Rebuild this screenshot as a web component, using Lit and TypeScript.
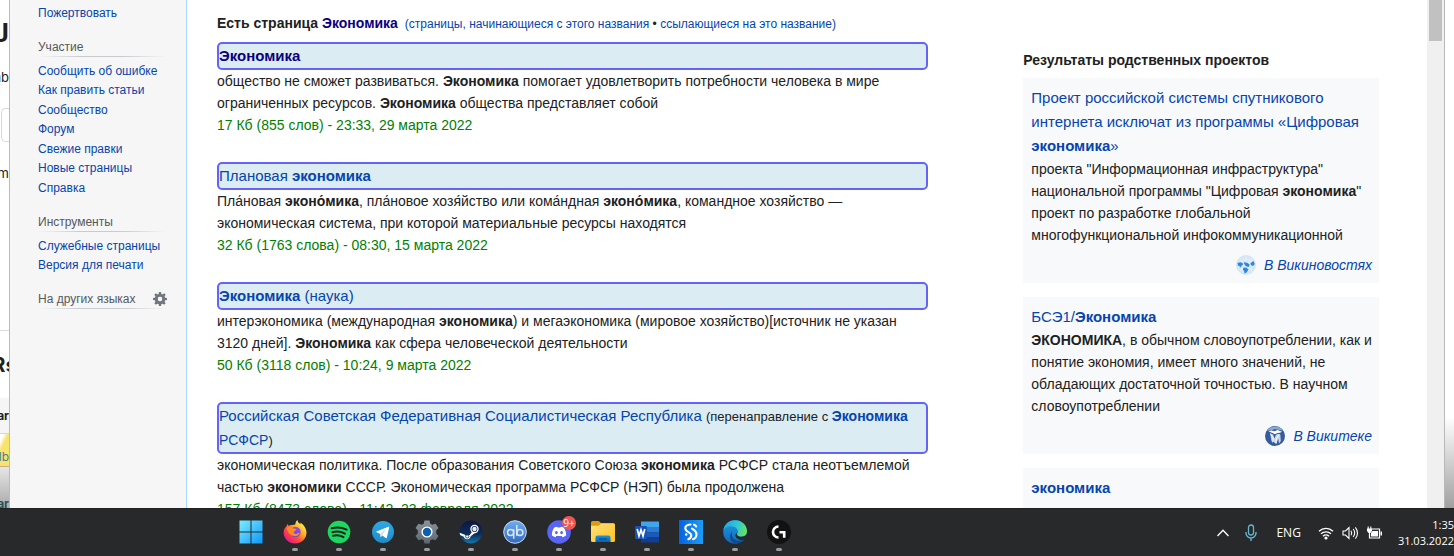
import { LitElement, html, svg, css } from "lit";
import { customElement } from "lit/decorators.js";

const searchLinks = ["Сообщить об ошибке", "Как править статьи", "Сообщество", "Форум", "Свежие правки", "Новые страницы", "Справка"];
const toolLinks = ["Служебные страницы", "Версия для печати"];

const results = [
  {
    title: html`<a class="visited" href="#"><b>Экономика</b></a>`,
    text: html`общество не сможет развиваться. <b>Экономика</b> помогает удовлетворить потребности человека в мире ограниченных ресурсов. <b>Экономика</b> общества представляет собой`,
    meta: "17 Кб (855 слов) - 23:33, 29 марта 2022",
  },
  {
    title: html`<a href="#">Плановая <b>экономика</b></a>`,
    text: html`Пла́новая <b>эконо́мика</b>, пла́новое хозя́йство или кома́ндная <b>эконо́мика</b>, командное хозяйство — экономическая система, при которой материальные ресурсы находятся`,
    meta: "32 Кб (1763 слова) - 08:30, 15 марта 2022",
  },
  {
    title: html`<a href="#"><b>Экономика</b> (наука)</a>`,
    text: html`интерэкономика (международная <b>экономика</b>) и мегаэкономика (мировое хозяйство)[источник не указан 3120 дней]. <b>Экономика</b> как сфера человеческой деятельности`,
    meta: "50 Кб (3118 слов) - 10:24, 9 марта 2022",
  },
  {
    title: html`<a href="#">Российская Советская Федеративная Социалистическая Республика</a> <span class="redirect">(перенаправление с <a href="#"><b>Экономика</b> РСФСР</a>)</span>`,
    text: html`экономическая политика. После образования Советского Союза <b>экономика</b> РСФСР стала неотъемлемой частью <b>экономики</b> СССР. Экономическая программа РСФСР (НЭП) была продолжена`,
    meta: "157 Кб (8473 слова) - 11:42, 23 февраля 2022",
  },
];

const newsLogo = svg`<svg viewBox="0 0 20 20" width="20" height="20">
  <circle cx="10" cy="10" r="10" fill="#d5e6f6"/>
  <path d="M10 1v18M1 10h18M3.500 3.500l13 13M16.500 3.500l-13 13" stroke="#eef6fd" stroke-width=".6"/>
  <circle cx="10" cy="10" r="6" fill="none" stroke="#eef6fd" stroke-width=".6"/>
  <path d="M1.500 8l3-.8 2.200 1 .2 1.800-1.700.8-.4 2-1.500-1.800-1.400-.6zM7.500 7.200l3.500.6 2.600 1.700-.9 2.600-2.200-.6L9 10.200zM14.500 8.300l2.800-2.300 1.500 3-1.700 2-2.100-.7zM7.500 12.500l3 .3 2 2-2 2.800-2 1.200-.3-2.600-1.300-1.500z" fill="#2f86d8"/>
</svg>`;

const sourceLogo = svg`<svg viewBox="0 0 20 20" width="20" height="20">
  <circle cx="10" cy="10" r="10" fill="#375a9c"/>
  <path d="M2 4.500A10 10 0 0 1 18 4.500L14 4 10 3 6 4.500z" fill="#8ba9cc"/>
  <path d="M3.500 5.500l3-1 3 .8 3-1.400 4.500 1.900-2 1-2.500.2-2.500 1.300L7 6.800z" fill="#fff"/>
  <path d="M5 7l3 1.500 1.500 4L11 8.800l2.500-1 1.800.7.5 6.500-1.800 2.500-.8-5-1.700 5-2-.5-1-3-.8 3L6.500 15z" fill="#c8d9e8"/>
  <path d="M6 8.500l1.800 3 .5 4.500M14 8.500l-2.500 4-.5 5" stroke="#f5fafc" stroke-width="1" fill="none"/>
</svg>`;

const sisters = [
  {
    title: html`Проект российской системы спутникового интернета исключат из программы «Цифровая <b>экономика</b>»`,
    text: html`проекта "Информационная инфраструктура" национальной программы "Цифровая <b>экономика</b>" проект по разработке глобальной многофункциональной инфокоммуникационной`,
    logo: newsLogo,
    site: "В Викиновостях",
  },
  {
    title: html`БСЭ1/<b>Экономика</b>`,
    text: html`<b>ЭКОНОМИКА</b>, в обычном словоупотреблении, как и понятие экономия, имеет много значений, не обладающих достаточной точностью. В научном словоупотреблении`,
    logo: sourceLogo,
    site: "В Викитеке",
  },
];

const apps = [
  { name: "Windows", running: false, art: svg`
    <defs><linearGradient id="win" x1="0" y1="0" x2="24" y2="24" gradientUnits="userSpaceOnUse"><stop stop-color="#7ff0ff"/><stop offset="1" stop-color="#0a94fa"/></linearGradient></defs>
    <path d="M.5.500h11v11H.5zM12.500.500h11v11h-11zM.5 12.500h11v11H.5zM12.500 12.500h11v11h-11z" fill="url(#win)"/>` },
  { name: "Firefox", running: true, art: svg`
    <defs>
      <linearGradient id="ff" x1="20" y1="3" x2="4" y2="21" gradientUnits="userSpaceOnUse"><stop stop-color="#fff44f"/><stop offset=".35" stop-color="#ffa827"/><stop offset=".65" stop-color="#ff4b3a"/><stop offset="1" stop-color="#e5158d"/></linearGradient>
      <linearGradient id="fp" x1="15" y1="6" x2="9" y2="16" gradientUnits="userSpaceOnUse"><stop stop-color="#a34bd8"/><stop offset="1" stop-color="#5a50d8"/></linearGradient>
    </defs>
    <path d="M3.400 6.500C4 5 4.600 4.200 5 4c0 .7.200 1.500.6 2 1-.8 2-1.100 3.200-1.100C11 5 12 4.800 12.500 3.500 12.700 2 13.200.800 14.500 0c-.1 2 1.500 3 3 4.300.2-.6 0-1.200-.2-1.800C21 5 23.500 8.800 23.500 12.600 23.500 19 18.300 23.600 12 23.600S.6 18.700.6 12.600c0-2.500.8-4.500 2.800-6.100z" fill="url(#ff)"/>
    <circle cx="12.500" cy="12" r="5.200" fill="url(#fp)"/>
    <path d="M3.500 8c2-1.600 5.200-1.200 6.800.6 1.300.2 2.800.2 3 .8-.3 1.200-2.300 1.600-2.600 2.600-.1 1 .9 2 2.300 1.900 1.600-.2 2.300-1.200 3.600-.7-1 2.300-3.500 3.300-5.500 2.800C7.500 15.500 4.500 12.500 3.500 8z" fill="#ff8a2a"/>` },
  { name: "Spotify", running: true, art: svg`
    <circle cx="12" cy="12" r="11.300" fill="#1ed760"/>
    <path d="M4.600 8.300c5-1.500 10.500-1 15 1.400M5.400 12.200c4.300-1.200 8.800-.7 12.600 1.400M6 15.800c3.600-.9 7.300-.5 10.500 1.300" fill="none" stroke="#14291b" stroke-linecap="round" stroke-width="2"/>` },
  { name: "Telegram", running: true, art: svg`
    <defs><linearGradient id="tg" x2="0" y2="1"><stop stop-color="#2fa9e6"/><stop offset="1" stop-color="#1f8bc9"/></linearGradient></defs>
    <circle cx="12" cy="12" r="11" fill="url(#tg)"/>
    <path d="M4.800 11.800l12.500-5c.6-.2 1 .1.800.9l-2.200 9.800c-.2.700-.6.800-1.200.5L11.300 15.500 9.700 17.300l-.5-3.400z" fill="#fff"/><path d="M9.300 14l6.200-5.500-4.500 6.400-1.300 2z" fill="#c5dcea"/>` },
  { name: "Параметры", running: true, art: svg`
    <defs><linearGradient id="st" x2="0" y2="1"><stop stop-color="#8b949b"/><stop offset="1" stop-color="#5d666f"/></linearGradient></defs>
    <path d="M9.500.500h5l.8 3.200 2 1 3.200-1L23.500 8l-2.300 2.400v3.200L23.500 16 20.500 20.300l-3.200-1-2 1-.8 3.200h-5l-.8-3.200-2-1-3.200 1L.500 16l2.300-2.400v-3.200L.500 8l3-4.300 3.200 1 2-1z" fill="url(#st)"/>
    <circle cx="12" cy="12" r="5.600" fill="#fff"/><circle cx="12" cy="12" r="4.200" fill="#0c5fb0"/>` },
  { name: "Steam", running: true, art: svg`
    <defs><linearGradient id="sm" x2="0" y2="1"><stop stop-color="#0c1640"/><stop offset=".6" stop-color="#0c2e5c"/><stop offset="1" stop-color="#1377b0"/></linearGradient></defs>
    <circle cx="12" cy="12" r="11.400" fill="url(#sm)"/>
    <path d="M.7 12.700l7 2.900 3-.6 3.300-4.500 2.500 2-4.800 3.800c-.5 2-1.800 3-3.500 3-1.800 0-3-1-3.400-2.500L1 15z" fill="#fff"/>
    <circle cx="15.500" cy="9" r="4.200" fill="#fff"/><circle cx="15.500" cy="9" r="2.900" fill="#16284e"/><circle cx="15.500" cy="9" r="2.200" fill="#e9edf2"/><circle cx="8.200" cy="16.300" r="1.700" fill="none" stroke="#16345c" stroke-width=".8"/>` },
  { name: "qBittorrent", running: true, art: svg`
    <defs><linearGradient id="qb" x2="0" y2="1"><stop stop-color="#70aef0"/><stop offset="1" stop-color="#3468bd"/></linearGradient></defs>
    <circle cx="12" cy="12" r="11.300" fill="url(#qb)" stroke="#c9dcf4" stroke-width="1"/>
    <g fill="none" stroke="#d7e6fa" stroke-width="1.500"><circle cx="7.600" cy="12.500" r="3"/><path d="M10.700 9.300v9.500M13.800 5v10.800"/><circle cx="16.900" cy="12.500" r="3"/></g>` },
  { name: "Discord", running: true, badge: "9+", art: svg`
    <circle cx="12" cy="12" r="11.800" fill="#5865f2"/>
    <path d="M7.200 7.600c1-.5 2-.8 3-.9l.5.900h2.600l.5-.9c1 .1 2 .4 3 .9 1.700 2.600 2.400 5 2.300 8-1.200.9-2.400 1.400-3.600 1.700l-.8-1.400H9.300l-.8 1.400c-1.200-.3-2.400-.8-3.600-1.700-.1-3 .6-5.400 2.300-8z" fill="#fff"/>
    <ellipse cx="9.400" cy="12.600" rx="1.400" ry="1.600" fill="#5865f2"/><ellipse cx="14.600" cy="12.600" rx="1.400" ry="1.600" fill="#5865f2"/>` },
  { name: "Проводник", running: true, art: svg`
    <defs><linearGradient id="fd" x2="1" y2="1"><stop stop-color="#ffe27a"/><stop offset="1" stop-color="#ffc021"/></linearGradient><linearGradient id="fb" x2="0" y2="1"><stop stop-color="#1d95dc"/><stop offset="1" stop-color="#0a5fae"/></linearGradient></defs>
    <path d="M0 2.500Q0 1 1.500 1h6.300l2.200 2H22q2 0 2 2v8H0z" fill="#dd9c08"/>
    <path d="M0 5.800h7.500L10 3.500h12.500Q24 3.500 24 5v15.500q0 1.500-1.500 1.500h-21Q0 22 0 20.500z" fill="url(#fd)"/>
    <path d="M4.500 22v-4.500q0-2 2-2h11q2 0 2 2V22z" fill="url(#fb)"/><path d="M8 19h8" stroke="#0a4e93" stroke-width="1.200"/>` },
  { name: "Word", running: true, art: svg`
    <path d="M6 1.500h18V8H6z" fill="#41a5ee"/><path d="M6 7h18v5.500H6z" fill="#2b7cd3"/><path d="M6 12.500h18v5H6z" fill="#185abd"/><path d="M6 17.500h18v5H6z" fill="#103f91"/>
    <rect x="0" y="6" width="12" height="13" rx="1" fill="#1752b5"/>
    <path d="M2.200 9l1.800 7L6 9.800 8 16l1.800-7" fill="none" stroke="#fff" stroke-width="1.700"/>` },
  { name: "Scratchpad", running: true, art: svg`
    <defs><linearGradient id="sc" x2="1" y2="0"><stop stop-color="#0563e0"/><stop offset="1" stop-color="#1d9df5"/></linearGradient></defs>
    <path d="M0 0h24v24H0z" fill="url(#sc)"/>
    <path d="M11.500 4.500C8 4.700 6.300 6.200 6.300 8.300c0 4 6 3.600 6 7 0 2-1.200 3.300-3 3.900M13 8.700c1.800 1.300 4.500 2.200 4.500 5.500 0 2.500-1.500 4.300-3.500 5M15 4.700c1 .3 1.700.9 2.200 1.800" fill="none" stroke="#fff" stroke-linecap="round" stroke-width="2.100"/><circle cx="7.200" cy="14.500" r="1.200" fill="#fff"/>` },
  { name: "Edge", running: true, art: svg`
    <defs>
      <linearGradient id="ea" x1="2" y1="6" x2="24" y2="12" gradientUnits="userSpaceOnUse"><stop stop-color="#28a9e0"/><stop offset=".5" stop-color="#2fc6d8"/><stop offset="1" stop-color="#6be84f"/></linearGradient>
      <linearGradient id="eb" x2="0" y2="1"><stop stop-color="#1b9de2"/><stop offset="1" stop-color="#1464b8"/></linearGradient>
    </defs>
    <circle cx="12" cy="12" r="11.800" fill="url(#eb)"/>
    <path d="M.4 10.500C1.200 4.300 6 .2 12 .2c7 0 12 5 12 10.800 0 3.500-2.600 5.700-5.700 5.700-2.500 0-4.300-1-4.300-2 0-.7 1-1.200 1-2.900 0-2.500-2.500-5.500-7-5.500-3.500 0-6.300 1.700-7.600 4.200z" fill="url(#ea)"/>
    <path d="M9.500 11.500c-2.300 4.300 1.300 9.500 6.500 9.200 2.300 0 4.200-.8 5.800-2-2 3.300-5.600 5.100-9.800 5.100-4.500-1.300-7.300-8.500-2.500-12.300z" fill="#104a91"/>
    <path d="M14 14.700c.7 1.500 2.300 2 4.300 2 2.200 0 4-.7 5.400-2.200l.8 3-2 1.700c-4.500 1.800-9 0-10-3-.3-1.500.5-2.500 1.500-3.500.3.800-.2 1.200 0 2z" fill="#27292b"/>` },
  { name: "Logitech G HUB", running: true, art: svg`
    <circle cx="12" cy="12" r="12" fill="#121212"/>
    <path d="M11.500 6.500a5.500 5.500 0 1 0 0 11" fill="none" stroke="#fff" stroke-width="2.600"/><path d="M12.500 12.300h4.700v5.400" fill="none" stroke="#fff" stroke-width="2.600"/>` },
];

@customElement("sister-card")
class SisterCard extends LitElement {
  static properties = { card: { attribute: false } };
  declare card: any;
  static styles = css`
    :host { display: block; background: #f8f9fa; padding: 8px 7px 8px 8px; }
    h4, p { margin: 0; font-weight: 400; }
    h4 { font-size: 15px; line-height: 24px; }
    p { font-size: 14px; line-height: 22px; }
    a { color: #0645ad; text-decoration: none; }
    .site { display: flex; justify-content: flex-end; align-items: center; gap: 8px; margin-top: 9px; line-height: 20px; font-style: italic; }
    svg { display: block; }
  `;
  render() {
    const c = this.card;
    return html`<h4><a href="#">${c.title}</a></h4>
      ${c.text ? html`<p>${c.text}</p>` : ""}
      ${c.site ? html`<div class="site">${c.logo}<a href="#">${c.site}</a></div>` : ""}`;
  }
}

@customElement("task-bar")
class TaskBar extends LitElement {
  static styles = css`
    :host { display: flex; justify-content: space-between; height: 48px; background: #27292b; color: #fff; border-top: 1px solid #202123; box-sizing: border-box; font-family: "Open Sans", "Noto Sans", sans-serif; }
    button { position: relative; border: 0; padding: 0; background: none; color: inherit; font: inherit; }
    svg { display: block; overflow: visible; }
    .apps { display: flex; padding-left: 229px; }
    .app { width: 44px; display: flex; flex-direction: column; align-items: center; gap: 4px; padding-top: 11px; }
    .dot { width: 6px; height: 3px; border-radius: 2px; background: #9c9d9e; }
    .badge { position: absolute; left: 25px; top: 7px; width: 14px; height: 14px; border-radius: 7px; background: #ee5555; font-size: 10px; line-height: 14px; text-align: center; }
    .tray { display: flex; align-items: center; font-size: 12px; }
    .status { display: flex; gap: 8px; margin: 0 16px 0 17px; }
    .mic { margin: 0 19px 0 15px; }
    .clock { text-align: right; font-size: 11px; line-height: 16px; }
  `;
  render() {
    return html`
      <nav class="apps">
        ${apps.map((a) => html`<button class="app" aria-label=${a.name}>
          <svg viewBox="0 0 24 24" width="24" height="24">${a.art}</svg>
          ${a.running ? html`<span class="dot"></span>` : ""}
          ${a.badge ? html`<span class="badge">${a.badge}</span>` : ""}
        </button>`)}
      </nav>
      <div class="tray">
        <button aria-label="Скрытые значки"><svg width="14" height="10" viewBox="0 0 14 10"><path d="M1.500 8L7 2.200 12.500 8" fill="none" stroke="#fff" stroke-width="1.300"/></svg></button>
        <button class="mic" aria-label="Микрофон"><svg width="12" height="18" viewBox="0 0 12 18"><rect x="3.500" y="1" width="5" height="10" rx="2.500" fill="none" stroke="#68b4cf" stroke-width="1.300"/><path d="M1 8v1a5 5 0 0 0 10 0V8M6 14v3" fill="none" stroke="#68b4cf" stroke-width="1.400"/></svg></button>
        <button>ENG</button>
        <button class="status" aria-label="Сеть, звук, батарея">
          <svg width="16" height="14" viewBox="0 0 16 14"><path d="M1 5.200a10 10 0 0 1 14 0M3 7.800a7.200 7.200 0 0 1 10 0M5 10.200a4.300 4.300 0 0 1 6 0" fill="none" stroke="#fff" stroke-width="1.300"/><circle cx="8" cy="12" r="1.600" fill="#fff"/></svg>
          <svg width="16" height="14" viewBox="0 0 16 14"><path d="M1 5h2.500L7 1.500v11L3.500 9H1zM9 4.800q1.500 2.200 0 4.400M11.200 3q3 4 0 8M13.400 1.300q4.200 5.700 0 11.400" fill="none" stroke="#fff" stroke-width="1.100"/></svg>
          <svg width="16" height="14" viewBox="0 0 16 14"><path d="M6 3h7.500v9H3.500V8" fill="none" stroke="#fff" stroke-width="1.200"/><path d="M6.500 5h5.500v5.500H5V7zM14.500 5.500H16v4h-1.500zM1 2.500h5V5L4.500 7h-2L1 5z" fill="#fff"/><path d="M2.200.5v2.500M4.800.5v2.500M3.500 7v3" stroke="#fff" stroke-width="1.100"/></svg>
        </button>
        <button class="clock">1:35<br />31.03.2022</button>
      </div>`;
  }
}

@customElement("app-root")
class AppRoot extends LitElement {
  static styles = css`
    :host { display: grid; grid-template-rows: minmax(0, 1fr) auto; height: 100vh; overflow: hidden; background: #fff; color: #202122; font: 14px/22px "Liberation Sans", Arial, sans-serif; }
    .screen { display: grid; grid-template-columns: 9px 178px minmax(0, 1fr) 17px 10px; overflow: hidden; }
    .screen > * { min-height: 0; overflow: hidden; }
    h2, h3, p, ul { margin: 0; padding: 0; list-style: none; }
    h2 { font-size: 14px; }
    a { color: #0645ad; text-decoration: none; }
    .visited { color: #0b0080; }

    .behind { display: grid; grid-template-rows: 66px 42px 34px 189px 67px 36px 32px 42px; white-space: nowrap; font-family: Inter, Roboto, sans-serif; }
    .behind > * { display: flex; justify-content: flex-end; align-items: center; overflow: hidden; }
    .big { font-size: 26px; font-weight: 700; }
    .mid { font-size: 20px; font-weight: 700; }
    .behind > .mid { justify-content: center; }
    .letters { font-size: 13px; }
    .behind > .letters { align-items: flex-start; }
    .field { border: 1px solid #d8d8d8; border-right: 0; border-radius: 5px 0 0 5px; margin-left: 1px; }
    .gap { padding-top: 20px; border-bottom: 1px solid #ddd; }
    .row { background: #f5f5f6; border-bottom: 1px solid #d5d6dc; font-size: 12px; font-weight: 700; }
    .yellow { background: linear-gradient(115deg, #fff 15%, #f8e46a 35%); color: #497d91; font-size: 12px; line-height: 18px; }
    .fade { background: linear-gradient(#e6e6e6, #a9a9a9); border-top: 1px solid #ccac8c; font-size: 12px; line-height: 8px; font-weight: 700; color: #27505c; }
    .behind > .yellow, .behind > .fade { align-items: flex-end; }

    .side { background: #f6f6f6; border-left: 1px solid #bbb; border-right: 1px solid #a7d7f9; padding: 4px 19px 0 28px; font-size: 12px; line-height: 19px; }
    .side h3 { display: flex; justify-content: space-between; align-items: center; height: 18px; margin: 15px 0 5px; font-size: 12px; line-height: 18px; font-weight: 400; color: #54595d; padding-bottom: 1px; background: linear-gradient(to right, #f6f6f600, #c8ccd1 33%, #c8ccd1 66%, #f6f6f600) bottom / 100% 1px no-repeat; }
    .side li:nth-child(even) { margin-bottom: 1px; }
    .gear { border: 0; padding: 0; background: none; }
    .gear svg { display: block; }

    .page { display: grid; grid-template-columns: 2fr 1fr; gap: 95px; padding: 12px 48px 0 30px; }
    .exists { margin-bottom: 8px; }
    .exists small { font-size: 12px; line-height: 16px; font-weight: 400; margin-left: 3px; }
    .result { margin-bottom: 26px; }
    .result h3 { font-size: 15px; line-height: 24px; font-weight: 400; background: #dcecf3; border: 2px solid #6464fa; border-radius: 5px; }
    .redirect { font-size: 13px; line-height: 16px; }
    .redirect a { font-size: 14px; }
    .meta { color: #008000; }
    aside { padding-top: 37px; }
    aside h2 { margin-bottom: 7px; }
    sister-card { margin-bottom: 14px; }

    .scroll { background: #f0f0f0; padding: 0 2px; }
    .thumb { height: 41px; background: #c1c1c1; }
    .edge { border-left: 1px solid #b8b8b8; background: linear-gradient(#fff 82%, #a0a0a0); }
  `;

  list(items: string[]) {
    return html`<ul>${items.map((t) => html`<li><a href="#">${t}</a></li>`)}</ul>`;
  }

  render() {
    return html`
      <div class="screen">
        <div class="behind">
          <div class="big">J</div>
          <div class="letters">mb</div>
          <div class="field"></div>
          <div class="gap letters">m</div>
          <div class="mid">Rs</div>
          <div class="row">ar</div>
          <div class="yellow">lb</div>
          <div class="fade">ar</div>
        </div>
        <nav class="side">
          ${this.list(["Пожертвовать"])}
          <h3>Участие</h3>
          ${this.list(searchLinks)}
          <h3>Инструменты</h3>
          ${this.list(toolLinks)}
          <h3>На других языках
            <button class="gear" aria-label="Настройки языка"><svg width="14" height="14" viewBox="0 0 20 20"><g transform="translate(10 10)" fill="#72777d"><path id="t" d="M1.500-10h-3l-1 6.500h5m0 7h-5l1 6.500h3"/><use href="#t" transform="rotate(45)"/><use href="#t" transform="rotate(90)"/><use href="#t" transform="rotate(135)"/></g><path d="M10 2.500a7.500 7.500 0 0 0 0 15 7.500 7.500 0 0 0 0-15v4a3.500 3.500 0 0 1 0 7 3.500 3.500 0 0 1 0-7" fill="#72777d"/></svg></button>
          </h3>
        </nav>
        <main class="page">
          <section>
            <h2 class="exists">Есть страница <a class="visited" href="#">Экономика</a> <small><a href="#">(страницы, начинающиеся с этого названия</a> • <a href="#">ссылающиеся на это название)</a></small></h2>
            ${results.map((r) => html`<article class="result"><h3>${r.title}</h3><p>${r.text}</p><p class="meta">${r.meta}</p></article>`)}
          </section>
          <aside>
            <h2>Результаты родственных проектов</h2>
            ${sisters.map((s) => html`<sister-card .card=${s}></sister-card>`)}
            <sister-card .card=${{ title: html`<b>экономика</b>`, text: html`&nbsp;` }}></sister-card>
          </aside>
        </main>
        <div class="scroll"><div class="thumb"></div></div>
        <div class="edge"></div>
      </div>
      <task-bar></task-bar>`;
  }
}
